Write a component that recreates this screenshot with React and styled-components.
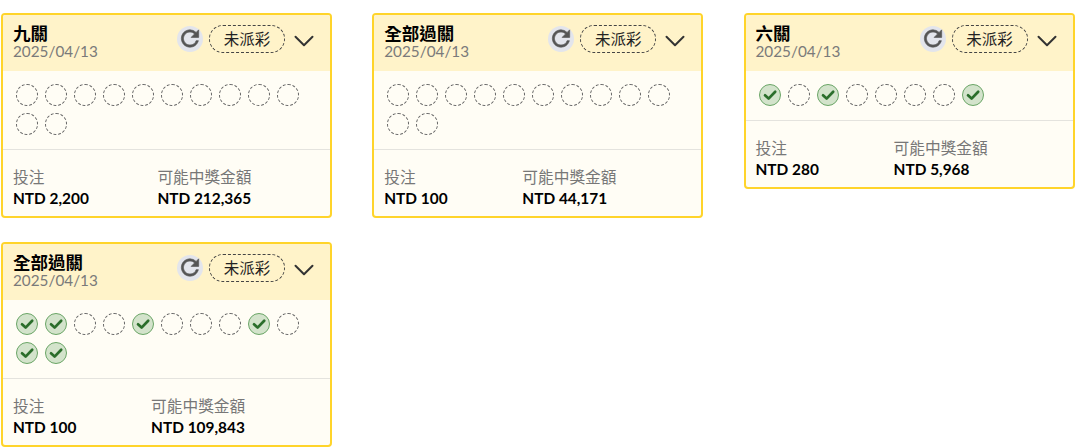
import React from 'react';
import styled, { createGlobalStyle } from 'styled-components';
import { MdRefresh } from 'react-icons/md';
import { ChevronDown } from 'lucide-react';

const GlobalStyle = createGlobalStyle`
  html, body {
    margin: 0;
    padding: 0;
    background: #ffffff;
    font-family: Lato, "Noto Sans CJK TC", sans-serif;
  }
`;

const Page = styled.div`
  display: grid;
  grid-template-columns: repeat(3, 331px);
  column-gap: 40.25px;
  row-gap: 24px;
  align-items: start;
  padding: 13px 0 0 1px;
`;

const Card = styled.div`
  border: 2px solid #ffd42a;
  border-radius: 4px;
  background: #fffdf5;
  overflow: hidden;
`;

const Header = styled.div`
  display: flex;
  align-items: center;
  height: 56px;
  padding: 0 10px;
  background: #fff3c9;
`;

const TitleBlock = styled.div`
  flex: 1;
  min-width: 0;
  margin-top: -3px;
`;

const Title = styled.div`
  font-size: 17.5px;
  line-height: 19px;
  font-weight: 700;
  color: #000000;
`;

const DateText = styled.div`
  font-size: 15.3px;
  line-height: 17px;
  color: #7a7a7a;
`;

const Refresh = styled.span`
  display: flex;
  align-items: center;
  justify-content: center;
  width: 26px;
  height: 26px;
  margin: 0 6px 9px 0;
  border-radius: 50%;
  background: #e3e5ec;
  color: #555555;

  svg path {
    stroke: currentColor;
    stroke-width: 0.6;
  }

  svg path[fill='none'] {
    stroke: none;
  }
`;

const Status = styled.span`
  box-sizing: border-box;
  width: 76px;
  height: 28px;
  margin-bottom: 8px;
  border: 1px dashed #444444;
  border-radius: 14px;
  font-size: 15.5px;
  line-height: 26px;
  text-align: center;
  color: #222222;
`;

const Chevron = styled(ChevronDown)`
  flex: none;
  margin: 0 -1px 4px 2px;
  color: #333333;
`;

const Balls = styled.div`
  display: flex;
  flex-wrap: wrap;
  gap: 7px;
  padding: 13px 13px 14px;
  border-bottom: 1px solid #e4e3de;
`;

const Ball = styled.span`
  box-sizing: border-box;
  display: flex;
  align-items: center;
  justify-content: center;
  width: 22px;
  height: 22px;
  border-radius: 50%;
  border: 1px ${(p) => (p.$won ? 'solid #6aa566' : 'dashed #666666')};
  background: ${(p) => (p.$won ? '#d3e3cb' : 'transparent')};
`;

const Tick = () => (
  <svg width="18" height="18" viewBox="0 0 18 18" fill="none">
    <path
      d="M4 9.3 L7.6 12.6 L14.2 5.8"
      stroke="#2b6e2b"
      strokeWidth="2.7"
      strokeLinecap="round"
      strokeLinejoin="round"
    />
  </svg>
);

const Stats = styled.div`
  display: flex;
  padding: 17px 10px 8px;
`;

const Stat = styled.div`
  flex: 1 1 auto;
`;

const Label = styled.div`
  font-size: 15.7px;
  line-height: 21px;
  color: #777777;
`;

const Value = styled.div`
  font-size: 15.4px;
  line-height: 20px;
  font-weight: 700;
  color: #000000;
`;

const cards = [
  { title: '九關', stake: 'NTD 2,200', payout: 'NTD 212,365', balls: [0, 0, 0, 0, 0, 0, 0, 0, 0, 0, 0, 0] },
  { title: '全部過關', stake: 'NTD 100', payout: 'NTD 44,171', balls: [0, 0, 0, 0, 0, 0, 0, 0, 0, 0, 0, 0] },
  { title: '六關', stake: 'NTD 280', payout: 'NTD 5,968', balls: [1, 0, 1, 0, 0, 0, 0, 1] },
  { title: '全部過關', stake: 'NTD 100', payout: 'NTD 109,843', balls: [1, 1, 0, 0, 1, 0, 0, 0, 1, 0, 1, 1] },
];

export default function App() {
  return (
    <>
      <GlobalStyle />
      <Page>
        {cards.map((card, i) => (
          <Card key={i}>
            <Header>
              <TitleBlock>
                <Title>{card.title}</Title>
                <DateText>2025/04/13</DateText>
              </TitleBlock>
              <Refresh>
                <MdRefresh size={27} />
              </Refresh>
              <Status>未派彩</Status>
              <Chevron size={34} strokeWidth={1.4} />
            </Header>
            <Balls>
              {card.balls.map((won, j) => (
                <Ball key={j} $won={!!won}>
                  {won ? <Tick /> : null}
                </Ball>
              ))}
            </Balls>
            <Stats>
              <Stat>
                <Label>投注</Label>
                <Value>{card.stake}</Value>
              </Stat>
              <Stat>
                <Label>可能中獎金額</Label>
                <Value>{card.payout}</Value>
              </Stat>
            </Stats>
          </Card>
        ))}
      </Page>
    </>
  );
}
